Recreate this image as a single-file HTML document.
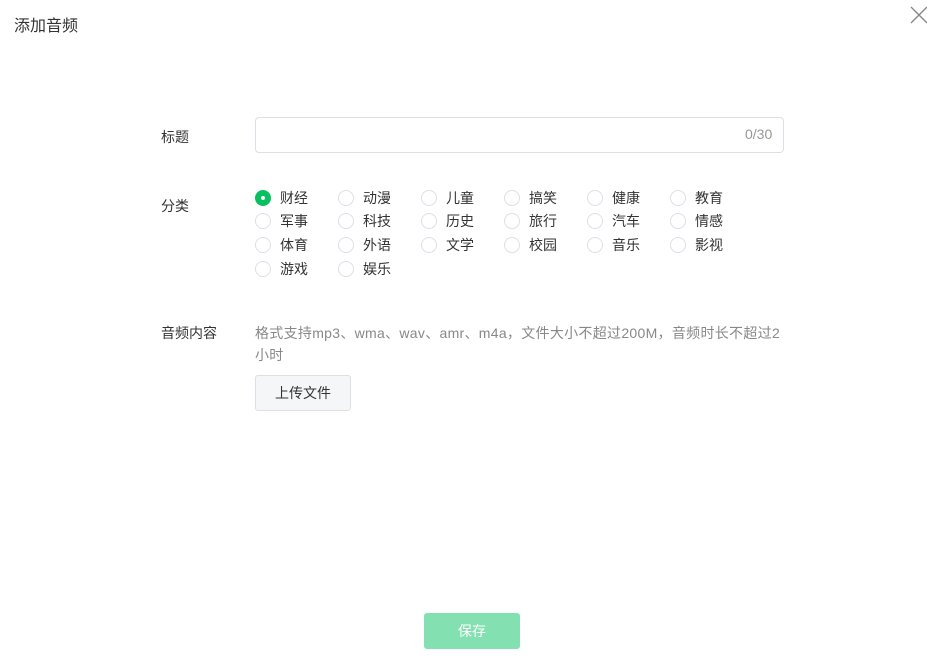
<!DOCTYPE html>
<html><head><meta charset="utf-8"><style>
body{margin:0;width:927px;height:659px;background:#fff;font-family:"Liberation Sans","Noto Sans CJK SC",sans-serif;position:relative;overflow:hidden;color:#333}
.a{position:absolute;white-space:nowrap}
.r{position:absolute;font-size:14px;color:#333;line-height:16px}
.r i{position:absolute;left:-25px;top:0;width:14px;height:14px;border:1px solid #dcdfe6;border-radius:50%;box-sizing:content-box}
.r i.on{background:#07c160;border-color:#07c160}
.r i.on:after{content:"";position:absolute;left:5px;top:5px;width:4px;height:4px;background:#fff;border-radius:50%}
</style></head><body>
<div class="a" style="left:14px;top:12px;font-size:16px;color:#333">添加音频</div>
<svg class="a" style="left:910px;top:6px" width="18" height="18"><path d="M1 1L17 17M17 1L1 17" stroke="#888" stroke-width="1.4"/></svg>
<div class="a" style="left:161px;top:127px;font-size:14px">标题</div>
<div class="a" style="left:255px;top:117px;width:527px;height:34px;border:1px solid #dcdfe6;border-radius:4px"></div>
<div class="a" style="left:745px;top:126px;font-size:14px;color:#999">0/30</div>
<div class="a" style="left:161px;top:196px;font-size:14px">分类</div>
<div class="r" style="left:280px;top:190px"><i class="on"></i>财经</div>
<div class="r" style="left:363px;top:190px"><i></i>动漫</div>
<div class="r" style="left:446px;top:190px"><i></i>儿童</div>
<div class="r" style="left:529px;top:190px"><i></i>搞笑</div>
<div class="r" style="left:612px;top:190px"><i></i>健康</div>
<div class="r" style="left:695px;top:190px"><i></i>教育</div>
<div class="r" style="left:280px;top:213px"><i></i>军事</div>
<div class="r" style="left:363px;top:213px"><i></i>科技</div>
<div class="r" style="left:446px;top:213px"><i></i>历史</div>
<div class="r" style="left:529px;top:213px"><i></i>旅行</div>
<div class="r" style="left:612px;top:213px"><i></i>汽车</div>
<div class="r" style="left:695px;top:213px"><i></i>情感</div>
<div class="r" style="left:280px;top:237px"><i></i>体育</div>
<div class="r" style="left:363px;top:237px"><i></i>外语</div>
<div class="r" style="left:446px;top:237px"><i></i>文学</div>
<div class="r" style="left:529px;top:237px"><i></i>校园</div>
<div class="r" style="left:612px;top:237px"><i></i>音乐</div>
<div class="r" style="left:695px;top:237px"><i></i>影视</div>
<div class="r" style="left:280px;top:261px"><i></i>游戏</div>
<div class="r" style="left:363px;top:261px"><i></i>娱乐</div>
<div class="a" style="left:161px;top:323px;font-size:14px">音频内容</div>
<div class="a" style="left:255px;top:322px;font-size:14px;color:#888;line-height:22px;letter-spacing:0.3px">格式支持mp3、wma、wav、amr、m4a，文件大小不超过200M，音频时长不超过2<br>小时</div>
<div class="a" style="left:255px;top:375px;width:94px;height:34px;border:1px solid #dcdfe6;border-radius:3px;background:#f5f6f7;font-size:14px;text-align:center;line-height:34px;color:#333">上传文件</div>
<div class="a" style="left:424px;top:613px;width:96px;height:36px;border-radius:3px;background:#83e0b0;color:#fff;font-size:14px;text-align:center;line-height:36px">保存</div>
</body></html>
